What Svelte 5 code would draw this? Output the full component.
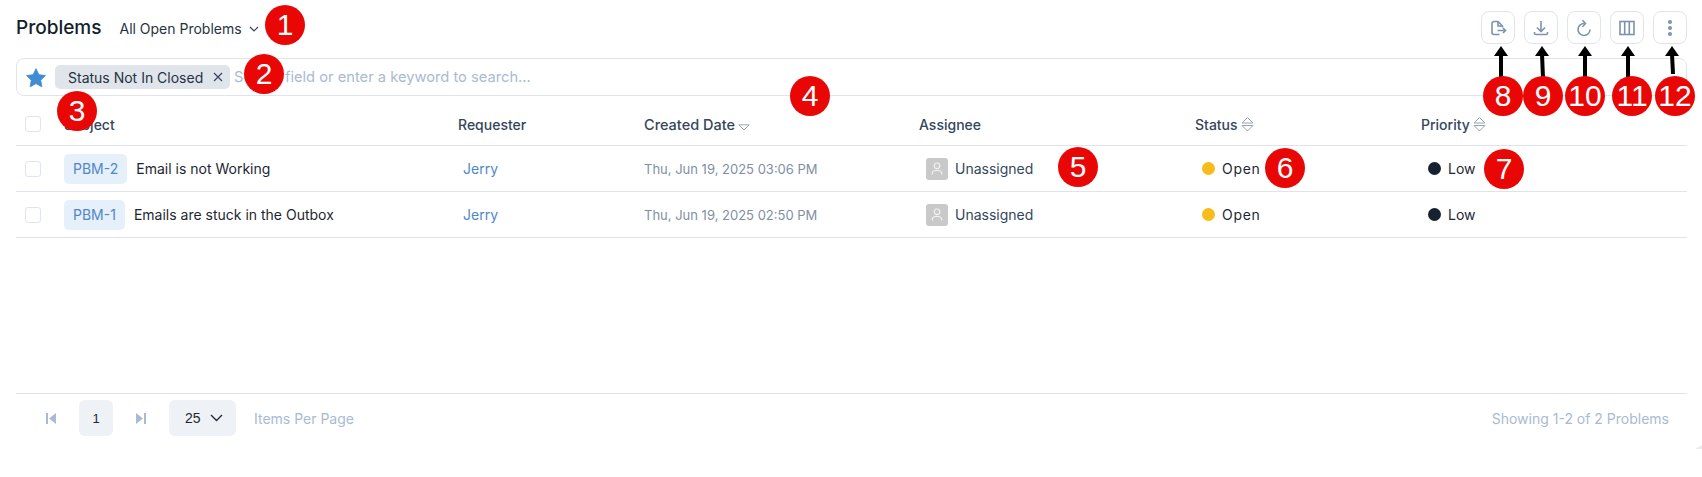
<script>
    const rows = [
        { id: 'PBM-2', subject: 'Email is not Working', requester: 'Jerry', created: 'Thu, Jun 19, 2025 03:06 PM' },
        { id: 'PBM-1', subject: 'Emails are stuck in the Outbox', requester: 'Jerry', created: 'Thu, Jun 19, 2025 02:50 PM' }
    ];

    // numbered callouts drawn over the screenshot
    const markers = [
        { n: 1, x: 285, y: 25 }, { n: 2, x: 264, y: 74 }, { n: 3, x: 77, y: 111 },
        { n: 4, x: 810, y: 96 }, { n: 5, x: 1078, y: 167 }, { n: 6, x: 1285, y: 168 },
        { n: 7, x: 1504, y: 169 }, { n: 8, x: 1503, y: 96 }, { n: 9, x: 1543, y: 96 },
        { n: 10, x: 1585, y: 96 }, { n: 11, x: 1632, y: 96 }, { n: 12, x: 1675, y: 96 }
    ];

    const arrows = [
        { x1: 1501, y1: 78, x2: 1501 }, { x1: 1543, y1: 78, x2: 1542 }, { x1: 1585, y1: 78, x2: 1585 },
        { x1: 1628, y1: 78, x2: 1628 }, { x1: 1673, y1: 74, x2: 1672 }
    ];
</script>

<div class="page">
    <header class="top">
        <div class="title-group">
            <h1>Problems</h1>
            <button class="view">
                All Open Problems
                <svg width="10" height="6" viewBox="0 0 10 6"><path d="M1 1l4 4 4-4" fill="none" stroke="#364658" stroke-width="1.2"/></svg>
            </button>
        </div>
        <div class="tools">
            <button class="tool" aria-label="Export">
                <svg width="18" height="18" viewBox="0 0 18 18" fill="none" stroke="#7d93ad" stroke-width="1.6">
                    <path d="M10.500 15.500H5a2 2 0 0 1-2-2v-9a2 2 0 0 1 2-2h4l4.500 4.500v1.500"/>
                    <path d="M9 2.500V7h4.500"/>
                    <path d="M8.500 11.500h8M14 9l2.500 2.500L14 14"/>
                </svg>
            </button>
            <button class="tool" aria-label="Download">
                <svg width="18" height="18" viewBox="0 0 18 18" fill="none" stroke="#7d93ad" stroke-width="1.6">
                    <path d="M9 2v10M5 8.500l4 4 4-4"/>
                    <path d="M2.500 13v1.200a1.300 1.300 0 0 0 1.300 1.300h10.400a1.300 1.300 0 0 0 1.300-1.300V13"/>
                </svg>
            </button>
            <button class="tool" aria-label="Refresh">
                <svg width="18" height="18" viewBox="0 0 18 18" fill="none" stroke="#7d93ad" stroke-width="1.6">
                    <path d="M9.500 4.500A6 6 0 1 0 15 10.500"/>
                    <path d="M7.500 1.200l3 3.300-3 3.300"/>
                </svg>
            </button>
            <button class="tool" aria-label="Columns">
                <svg width="16" height="16" viewBox="0 0 16 16" fill="none" stroke="#7d93ad" stroke-width="1.6">
                    <rect x="1" y="1.500" width="14" height="13"/>
                    <path d="M5.700 1.500v13M10.300 1.500v13"/>
                </svg>
            </button>
            <button class="tool" aria-label="More">
                <svg width="6" height="18" viewBox="0 0 6 18" fill="#7d93ad">
                    <circle cx="3" cy="3" r="2"/><circle cx="3" cy="9" r="2"/><circle cx="3" cy="15" r="2"/>
                </svg>
            </button>
        </div>
    </header>

    <div class="search">
        <svg width="20" height="19" viewBox="0 0 24 23"><path d="M12 .8l3.500 7.300 8 1.100-5.800 5.600 1.400 8L12 18.900l-7.100 3.900 1.400-8L.5 9.200l8-1.100z" fill="#3f8bd4" stroke="#3f8bd4" stroke-linejoin="round"/></svg>
        <span class="chip">
            Status Not In Closed
            <svg width="10" height="10" viewBox="0 0 10 10"><path d="M1 1l8 8M9 1l-8 8" stroke="#364658" stroke-width="1.2"/></svg>
        </span>
        <span class="placeholder"><span class="first-word">Select</span>field or enter a keyword to search...</span>
    </div>

    <div class="table">
        <div class="row head">
            <span class="check"></span>
            <span>Subject</span>
            <span>Requester</span>
            <span class="sortable created">
                Created Date
                <svg class="down" width="12" height="7" viewBox="0 0 12 7"><path d="M.8.800h10.400L6 6z" fill="none" stroke="#9aa5b3"/></svg>
            </span>
            <span>Assignee</span>
            <span class="sortable">
                Status
                <svg class="updown" width="13" height="16" viewBox="0 0 13 16" fill="none" stroke="#9aa5b3"><path d="M1 7h11L6.500 1.500zM1 9.500h11L6.500 15z"/></svg>
            </span>
            <span class="sortable">
                Priority
                <svg class="updown" width="13" height="16" viewBox="0 0 13 16" fill="none" stroke="#9aa5b3"><path d="M1 7h11L6.500 1.500zM1 9.500h11L6.500 15z"/></svg>
            </span>
        </div>
        {#each rows as row}
            <div class="row">
                <span class="check"></span>
                <span class="subject"><span class="tag">{row.id}</span>{row.subject}</span>
                <span class="link">{row.requester}</span>
                <span class="date">{row.created}</span>
                <span class="assignee">
                    <span class="avatar">
                        <svg width="12" height="13" viewBox="0 0 12 13" fill="none" stroke="#f2f2f2" stroke-width="1.2"><circle cx="6" cy="3.800" r="2.800"/><path d="M1.200 12.500v-1a3.500 3.500 0 0 1 3.500-3h2.600a3.500 3.500 0 0 1 3.500 3v1"/></svg>
                    </span>
                    Unassigned
                </span>
                <span class="pill status"><i class="dot open"></i>Open</span>
                <span class="pill priority"><i class="dot low"></i>Low</span>
            </div>
        {/each}
    </div>

    <footer class="foot">
        <svg class="nav" width="10" height="11" viewBox="0 0 10 11" fill="#a9bad2"><rect width="2" height="11"/><path d="M10 0v11L3 5.500z"/></svg>
        <span class="page-no">1</span>
        <svg class="nav next" width="10" height="11" viewBox="0 0 10 11" fill="#a9bad2"><rect x="8" width="2" height="11"/><path d="M0 0v11l7-5.500z"/></svg>
        <span class="size">25 <svg width="13" height="8" viewBox="0 0 13 8"><path d="M1 1l5.500 5.500L12 1" fill="none" stroke="#1d2733" stroke-width="1.3"/></svg></span>
        <span class="muted per">Items Per Page</span>
        <span class="muted count">Showing 1-2 of 2 Problems</span>
    </footer>

    <svg class="arrows" width="1702" height="477">
        {#each arrows as a}
            <line x1={a.x1} y1={a.y1} x2={a.x2} y2="54" stroke="#000" stroke-width="4"/>
            <path d="M{a.x2} 46l7 10h-14z" fill="#000"/>
        {/each}
    </svg>
    {#each markers as m}
        <span class="marker" style="left:{m.x - 20}px;top:{m.y - 20}px">{m.n}</span>
    {/each}
    <i class="corner"></i>
</div>

<style>
    :global(body) {
        background: #fff;
    }

    .page {
        position: relative;
        width: 1702px;
        height: 477px;
        overflow: hidden;
        box-sizing: border-box;
        padding: 11px 15px 0 16px;
        font-family: Inter, "Noto Sans", sans-serif;
        font-size: 14px;
        color: #1d2733;
    }

    .top {
        display: flex;
        justify-content: space-between;
        align-items: center;
        height: 33px;
    }

    .title-group {
        display: flex;
        align-items: center;
        gap: 18px;
    }

    h1 {
        margin: 0;
        font-size: 19px;
        font-weight: 500;
        color: #141f2c;
    }

    button {
        font: inherit;
        color: inherit;
        background: none;
        border: 0;
        padding: 0;
    }

    .view {
        display: flex;
        align-items: center;
        gap: 7px;
        margin-top: 2px;
        color: #26323f;
    }

    .tools {
        display: flex;
        gap: 9px;
    }

    .tool {
        display: flex;
        align-items: center;
        justify-content: center;
        width: 34px;
        height: 33px;
        border: 1px solid #dfe4ee;
        border-radius: 8px;
        box-sizing: border-box;
    }

    .search {
        display: flex;
        align-items: center;
        height: 38px;
        box-sizing: border-box;
        margin-top: 14px;
        padding-left: 9px;
        border: 1px solid #dfe4ee;
        border-radius: 8px;
    }

    .chip {
        display: flex;
        align-items: center;
        justify-content: space-between;
        box-sizing: border-box;
        width: 175px;
        height: 24px;
        margin-left: 9px;
        padding: 0 7px 0 13px;
        background: #e0e5ec;
        border-radius: 5px;
        color: #26323f;
    }

    .placeholder {
        margin-left: 4px;
        font-size: 14.7px;
        color: #a9bad2;
    }

    .first-word {
        display: inline-block;
        width: 51px;
    }

    .table {
        margin-top: 3px;
    }

    .row {
        display: grid;
        grid-template-columns: 48px 394px 186px 275px 276px 226px 1fr;
        align-items: center;
        height: 46px;
        border-bottom: 1px solid #dfe3ec;
        box-sizing: border-box;
    }

    .head {
        height: 47px;
        padding-top: 4px;
        font-weight: 500;
        color: #34465c;
    }

    .check {
        width: 16px;
        height: 16px;
        margin-left: 9px;
        border: 1px solid #dfe4ee;
        border-radius: 3px;
        box-sizing: border-box;
    }

    .sortable {
        display: flex;
        align-items: center;
        gap: 3px;
    }

    .updown {
        flex: none;
    }

    .created {
        font-size: 14.5px;
    }

    .down {
        margin-top: 7px;
    }

    .subject {
        display: flex;
        align-items: center;
        gap: 9px;
    }

    .tag {
        display: flex;
        align-items: center;
        height: 30px;
        padding: 0 9px;
        background: #e6f0fa;
        border-radius: 5px;
        color: #4f87cb;
    }

    .link {
        padding-left: 5px;
        color: #4f87cb;
    }

    .date {
        font-size: 13px;
        color: #7f8fa4;
    }

    .assignee {
        display: flex;
        align-items: center;
        gap: 7px;
        padding-left: 7px;
        color: #34465c;
    }

    .avatar {
        display: flex;
        align-items: center;
        justify-content: center;
        width: 22px;
        height: 22px;
        background: #c9c9c9;
        border-radius: 3px;
    }

    .pill {
        display: flex;
        align-items: center;
        gap: 7px;
        padding-left: 7px;
    }

    .status {
        letter-spacing: 0.7px;
    }

    .dot {
        width: 13px;
        height: 13px;
        border-radius: 50%;
    }

    .open {
        background: #f7bc19;
    }

    .low {
        background: #16222f;
    }

    .foot {
        position: absolute;
        left: 16px;
        right: 15px;
        top: 393px;
        height: 48px;
        display: flex;
        align-items: center;
        padding-top: 1px;
        box-sizing: border-box;
        border-top: 1px solid #dfe3ec;
    }

    .nav {
        margin-left: 30px;
    }

    .next {
        margin-left: 23px;
    }

    .page-no {
        display: flex;
        align-items: center;
        justify-content: center;
        width: 34px;
        height: 36px;
        margin-left: 23px;
        background: #eef1f6;
        border-radius: 6px;
        font-size: 13px;
        font-family: "Liberation Sans", sans-serif;
    }

    .size {
        display: flex;
        align-items: center;
        gap: 9px;
        box-sizing: border-box;
        width: 67px;
        height: 36px;
        margin-left: 23px;
        padding-left: 16px;
        background: #eef1f6;
        border-radius: 6px;
        font-family: "Liberation Sans", sans-serif;
    }

    .muted {
        color: #a9bad2;
    }

    .per {
        margin-left: 18px;
    }

    .count {
        margin-left: auto;
        margin-right: 18px;
    }

    .arrows {
        position: absolute;
        left: 0;
        top: 0;
        pointer-events: none;
    }

    .marker {
        position: absolute;
        display: flex;
        align-items: center;
        justify-content: center;
        width: 40px;
        height: 40px;
        border-radius: 50%;
        background: #e90706;
        color: #fff;
        font-family: "Liberation Sans", sans-serif;
        font-size: 30px;
    }

    .corner {
        position: absolute;
        right: 0;
        top: 445px;
        width: 7px;
        height: 4px;
        background: #ececec;
        clip-path: polygon(100% 0, 100% 100%, 0 100%);
    }
</style>
